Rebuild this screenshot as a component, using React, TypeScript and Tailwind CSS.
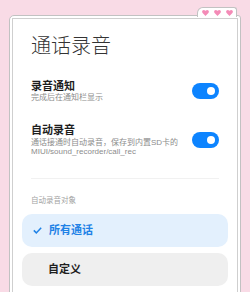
import React from 'react';

const Toggle = () => (
    <div className="flex items-center justify-end w-[27px] h-[16px] rounded-full bg-[#0d84ff] pr-[4px] shrink-0">
        <div className="w-[8px] h-[8px] rounded-full bg-white"></div>
    </div>
);

const Heart = () => (
    <svg width="7" height="6" viewBox="0 0 10 9">
        <path d="M5 9 L1 5 C-1 3 0 0 2.5 0 C4 0 5 1.5 5 1.5 C5 1.5 6 0 7.5 0 C10 0 11 3 9 5 Z" fill="#f48bb7" />
    </svg>
);

const SettingRow = ({ title, desc, gap }: { title: string; desc: React.ReactNode; gap: string }) => (
    <div className="flex items-center justify-between px-[9px]">
        <div className="flex flex-col">
            <div className="text-[11px] leading-[12px] font-bold text-[#1e1e1e]">{title}</div>
            <div className={`${gap} text-[8px] leading-[9px] text-[#8c8c8c]`}>{desc}</div>
        </div>
        <Toggle />
    </div>
);

export default function App() {
    return (
        <div
            className="w-[250px] h-[292px] overflow-hidden bg-[#f9dbe6] pt-[15px] pl-[9px]"
            style={{ fontFamily: '"Liberation Sans", "Noto Sans CJK SC", sans-serif' }}
        >
            <div className="relative w-[232px] h-[300px] bg-white border border-[#c2c2c2] rounded-tl-[5px] rounded-tr-[3px] p-[2px]">
                {/* tab with hearts */}
                <div className="absolute -top-[9px] right-[3px] w-[40px] h-[10px] bg-white border border-b-0 border-[#c2c2c2] rounded-tl-[6px] rounded-tr-[3px] flex items-center justify-center gap-[5px] pt-[1px]">
                    <Heart />
                    <Heart />
                    <Heart />
                </div>
                <div className="h-full border border-[#cfcfcf] flex flex-col px-[9px]">
                    <div className="mt-[13px] px-[9px] text-[20px] leading-[28px] font-light text-[#333]">通话录音</div>

                    <div className="mt-[20px]">
                        <SettingRow title="录音通知" desc="完成后在通知栏显示" gap="mt-[1px]" />
                    </div>
                    <div className="mt-[22px]">
                        <SettingRow
                            title="自动录音"
                            gap="mt-[2px]"
                            desc={<>通话接通时自动录音，保存到内置SD卡的<br />MIUI/sound_recorder/call_rec</>}
                        />
                    </div>

                    <div className="mt-[22px] mx-[9px] h-px bg-[#f1f1f1]"></div>

                    <div className="mt-[17px] px-[9px] text-[7.5px] leading-[10px] text-[#a3a3a3]">自动录音对象</div>

                    <div className="mt-[8px] h-[33px] rounded-[10px] bg-[#e3f0fd] flex items-center pl-[11px]">
                        <svg width="9" height="7" viewBox="0 0 9 7" className="mr-[7px]">
                            <path d="M0.8 3.4 L3.3 5.9 L8.2 0.8" stroke="#1f82e6" strokeWidth="1.5" fill="none" />
                        </svg>
                        <span className="text-[11px] font-bold text-[#1f82e6]">所有通话</span>
                    </div>
                    <div className="mt-[6px] h-[33px] rounded-[10px] bg-[#efefef] flex items-center pl-[26px]">
                        <span className="text-[11px] font-bold text-[#1e1e1e]">自定义</span>
                    </div>
                </div>
            </div>
        </div>
    );
}
